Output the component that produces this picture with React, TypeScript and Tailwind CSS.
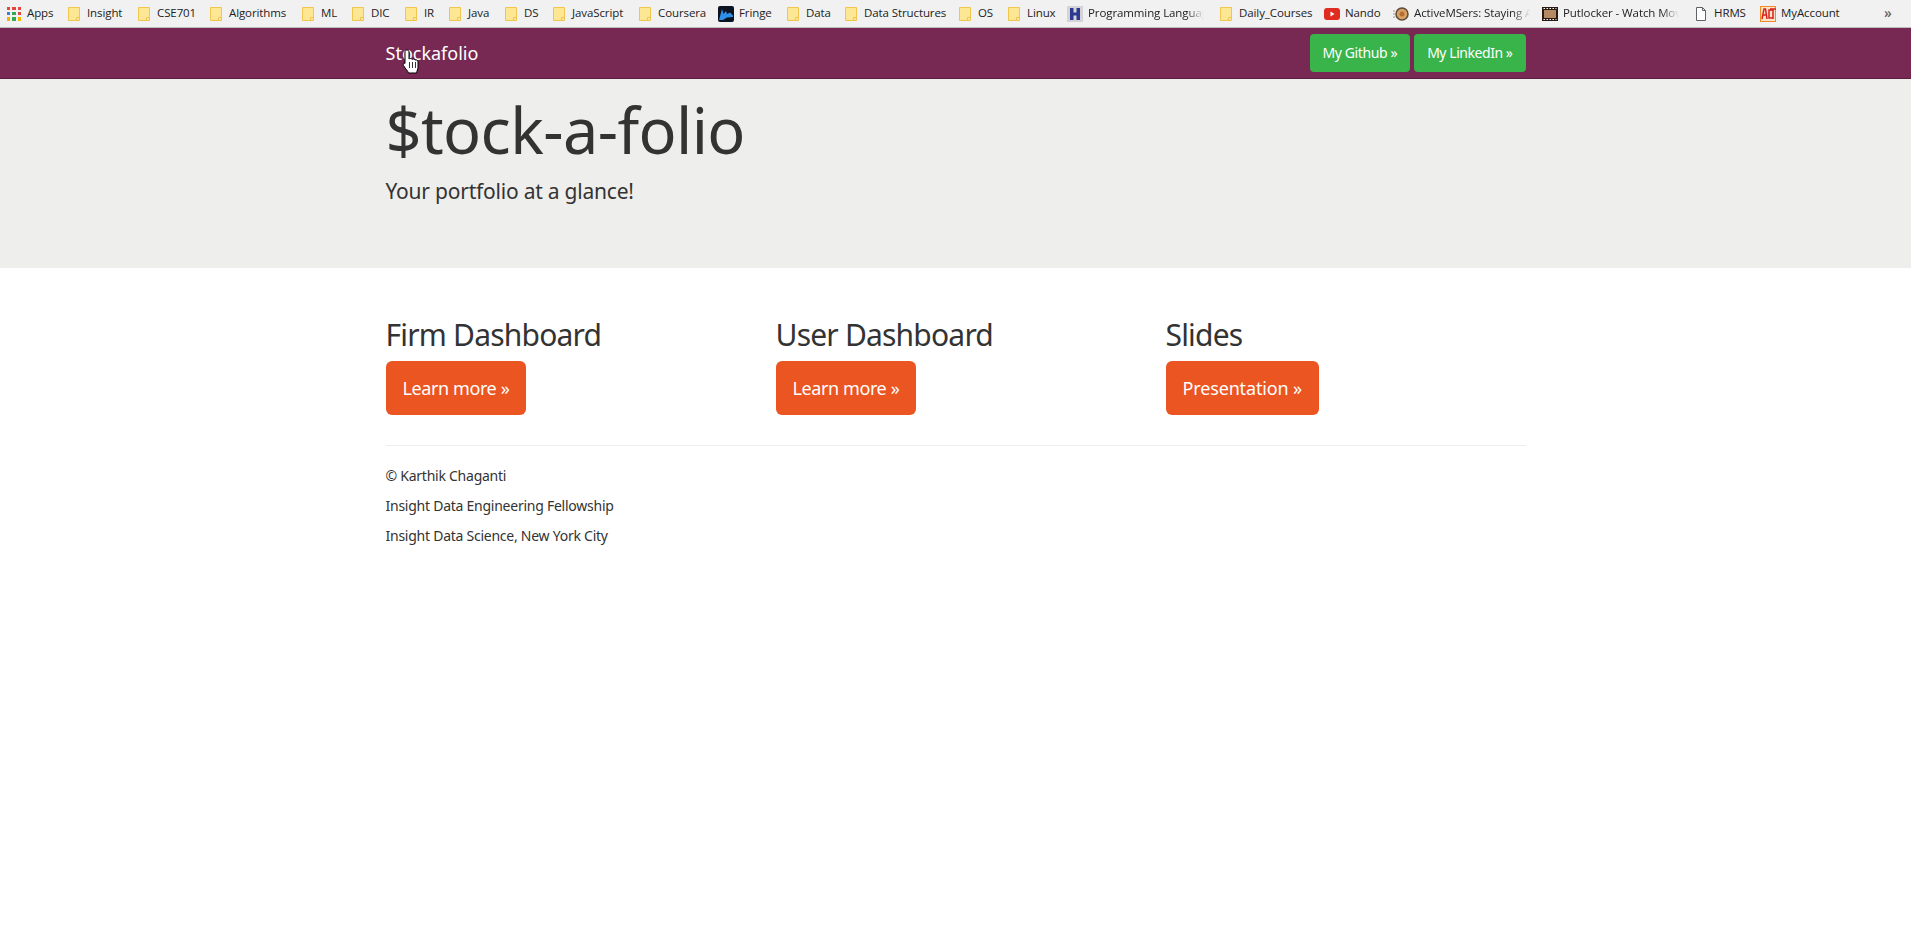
import React from "react";

function Folder() {
  return (
    <svg width="16" height="16" viewBox="0 0 16 16" className="shrink-0">
      <path d="M2.5 1.5h11v13h-11z" fill="#fde694" stroke="#f0c64f" />
      <path d="M10.5 14.5v-3h3" fill="none" stroke="#f0c64f" />
    </svg>
  );
}

function AppsIcon() {
  const colors = ["#e8453c", "#e8453c", "#e8453c", "#3b7dd8", "#34a853", "#e8453c", "#f4b400", "#34a853", "#f4b400"];
  return (
    <div className="grid h-[16px] w-[16px] shrink-0 grid-cols-3 gap-[2px] p-[1px]">
      {colors.map((c, i) => (
        <span key={i} style={{ backgroundColor: c }} />
      ))}
    </div>
  );
}

function FringeIcon() {
  return (
    <svg width="16" height="16" viewBox="0 0 16 16" className="shrink-0">
      <rect width="16" height="16" rx="2" fill="#0b1220" />
      <path d="M1 14 L4 3 L5.500 8 L8 5 L9 8 L12 6.500 L15 9.500 V11 L9 11.500 L5 14 Z" fill="#2f8fe6" />
    </svg>
  );
}

function HIcon() {
  return (
    <svg width="16" height="16" viewBox="0 0 16 16" className="shrink-0">
      <rect width="16" height="16" fill="#d4d4d8" />
      <path d="M3 2h3.5v4.5h3V2H13v12H9.500V9.500h-3V14H3z" fill="#2b3990" />
    </svg>
  );
}

function YoutubeIcon() {
  return (
    <svg width="16" height="16" viewBox="0 0 16 16" className="shrink-0">
      <rect y="2" width="16" height="12" rx="3" fill="#e02b20" />
      <path d="M6.500 5.500v5l4-2.500z" fill="#fff" />
    </svg>
  );
}

function WoodIcon() {
  return (
    <svg width="16" height="16" viewBox="0 0 16 16" className="shrink-0">
      <circle cx="9" cy="8" r="6" fill="#d9a066" stroke="#5c4a36" strokeWidth="1.500" />
      <circle cx="9" cy="8" r="2.500" fill="#b3702f" />
      <path d="M0 5h2M0 8h2M0 11h2" stroke="#9a9a9a" />
    </svg>
  );
}

function FilmIcon() {
  return (
    <svg width="16" height="16" viewBox="0 0 16 16" className="shrink-0">
      <rect x="0" y="1" width="16" height="14" fill="#2a1a14" />
      <rect x="2" y="4" width="12" height="8" fill="#b58a63" />
      <path d="M1.500 2.500h13M1.500 13.500h13" stroke="#fff" strokeDasharray="1.500 1.500" />
    </svg>
  );
}

function PageIcon() {
  return (
    <svg width="16" height="16" viewBox="0 0 16 16" className="shrink-0">
      <path d="M3.500 1.500h6l3 3v10h-9z M9.500 1.500v3h3" fill="#fff" stroke="#5f6368" />
    </svg>
  );
}

function ActIcon() {
  return (
    <svg width="16" height="16" viewBox="0 0 16 16" className="shrink-0">
      <rect x="0.500" y="0.500" width="15" height="15" fill="#fbe3c8" stroke="#f08a24" />
      <path d="M2 13L4 3h1.500L7 13M3 9h3M12.500 4H9v8h3.500M10 3h6M13 3v10" fill="none" stroke="#d8231c" strokeWidth="1.500" />
    </svg>
  );
}

const bookmarks = [
  { label: "Apps", w: "w-[60px]", icon: <AppsIcon /> },
  { label: "Insight", w: "w-[70px]", icon: <Folder /> },
  { label: "CSE701", w: "w-[72px]", icon: <Folder /> },
  { label: "Algorithms", w: "w-[92px]", icon: <Folder /> },
  { label: "ML", w: "w-[50px]", icon: <Folder /> },
  { label: "DIC", w: "w-[53px]", icon: <Folder /> },
  { label: "IR", w: "w-[44px]", icon: <Folder /> },
  { label: "Java", w: "w-[56px]", icon: <Folder /> },
  { label: "DS", w: "w-[48px]", icon: <Folder /> },
  { label: "JavaScript", w: "w-[86px]", icon: <Folder /> },
  { label: "Coursera", w: "w-[81px]", icon: <Folder /> },
  { label: "Fringe", w: "w-[67px]", icon: <FringeIcon /> },
  { label: "Data", w: "w-[58px]", icon: <Folder /> },
  { label: "Data Structures", w: "w-[114px]", icon: <Folder /> },
  { label: "OS", w: "w-[49px]", icon: <Folder /> },
  { label: "Linux", w: "w-[61px]", icon: <Folder /> },
  { label: "Programming Languages", w: "w-[151px]", icon: <HIcon />, fade: true },
  { label: "Daily_Courses", w: "w-[106px]", icon: <Folder /> },
  { label: "Nando", w: "w-[69px]", icon: <YoutubeIcon /> },
  { label: "ActiveMSers: Staying Active", w: "w-[149px]", icon: <WoodIcon />, fade: true },
  { label: "Putlocker - Watch Movies", w: "w-[151px]", icon: <FilmIcon />, fade: true },
  { label: "HRMS", w: "w-[67px]", icon: <PageIcon /> },
  { label: "MyAccount", w: "w-[124px]", icon: <ActIcon /> },
];

function BookmarksBar() {
  return (
    <div className="flex h-[28px] items-center border-b border-[#bdbdbd] bg-[#f1f1f1] pl-[6px] font-['Open_Sans',sans-serif] text-[11.5px] tracking-[-0.1px] text-[#222222]">
      {bookmarks.map((b) => (
        <div key={b.label} className={`flex shrink-0 items-center gap-[5px] ${b.w}`}>
          {b.icon}
          <span
            className={
              b.fade
                ? "mb-[2px] w-[116px] overflow-hidden whitespace-nowrap [mask-image:linear-gradient(to_right,black_85%,transparent)]"
                : "mb-[2px] whitespace-nowrap"
            }
          >
            {b.label}
          </span>
        </div>
      ))}
      <span className="mb-[2px] text-[14px] font-semibold text-[#666666]">»</span>
    </div>
  );
}

function Navbar() {
  return (
    <nav className="h-[51px] border-b border-[#5a1f3f] bg-[#772953]">
      <div className="mx-auto flex h-full w-[1140px] items-center justify-between text-white">
        <a className="text-[18px]">Stockafolio</a>
        <div className="flex gap-[4px]">
          <a className="rounded-[4px] bg-[#38b44a] px-[13px] py-[8px] text-[14px] leading-[22px] tracking-[-0.4px]">My Github »</a>
          <a className="rounded-[4px] bg-[#38b44a] px-[13px] py-[8px] text-[14px] leading-[22px] tracking-[-0.45px]">My LinkedIn »</a>
        </div>
      </div>
    </nav>
  );
}

function Column({ title, action, tracking }: { title: string; action: string; tracking: string }) {
  return (
    <div>
      <h2 className="text-[30px] leading-[33px] tracking-[-0.8px] text-[#333333]">{title}</h2>
      <a className={`mt-[10px] inline-block rounded-[6px] bg-[#eb5522] px-[17px] py-[12px] text-[18px] leading-[30px] text-white ${tracking}`}>
        {action}
      </a>
    </div>
  );
}

export default function App() {
  return (
    <div className="relative min-h-[946px] bg-white font-['Noto_Sans',sans-serif] text-[#333333]">
      <BookmarksBar />
      <Navbar />

      <div className="h-[189px] bg-[#eeeeec] pt-[16px]">
        <div className="mx-auto w-[1140px]">
          <h1 className="text-[63px] leading-[69px] tracking-[-0.6px] text-[#333333]">$tock-a-folio</h1>
          <p className="mt-[12px] text-[21px] leading-[30px] tracking-[-0.22px]">Your portfolio at a glance!</p>
        </div>
      </div>

      <div className="mx-auto w-[1140px]">
        <div className="grid grid-cols-[390px_390px_360px] pt-[50px]">
          <Column title="Firm Dashboard" action="Learn more »" tracking="tracking-[-0.4px]" />
          <Column title="User Dashboard" action="Learn more »" tracking="tracking-[-0.4px]" />
          <Column title="Slides" action="Presentation »" tracking="tracking-[-0.15px]" />
        </div>
        <hr className="mt-[30px] border-[#eeeeee]" />
        <footer className="mt-[20px] text-[14px] leading-[20px] tracking-[-0.25px]">
          <p className="mb-[10px]">© Karthik Chaganti</p>
          <p className="mb-[10px]">Insight Data Engineering Fellowship</p>
          <p>Insight Data Science, New York City</p>
        </footer>
      </div>

      {/* mouse pointer over the brand */}
      <svg width="18" height="25" viewBox="0 0 18 25" className="absolute left-[402px] top-[49px]">
        <path
          d="M5 1c1.200 0 2 .9 2 2V10c.6-.8 2.600-.7 3 .4.7-.7 2.600-.5 3 .7.8-.5 3-.2 3 1.700V18c0 2.500-1.200 3.500-1.300 6H6.500C6 22 3.500 20 1.500 16.500.7 15 2 13.500 3 14.500V3c0-1.100.8-2 2-2z"
          fill="#fff"
          stroke="#000"
          strokeWidth="1"
        />
        <path d="M7.500 13v6M10.500 13v6M13.500 13v6" stroke="#000" strokeWidth="0.800" />
      </svg>
    </div>
  );
}
